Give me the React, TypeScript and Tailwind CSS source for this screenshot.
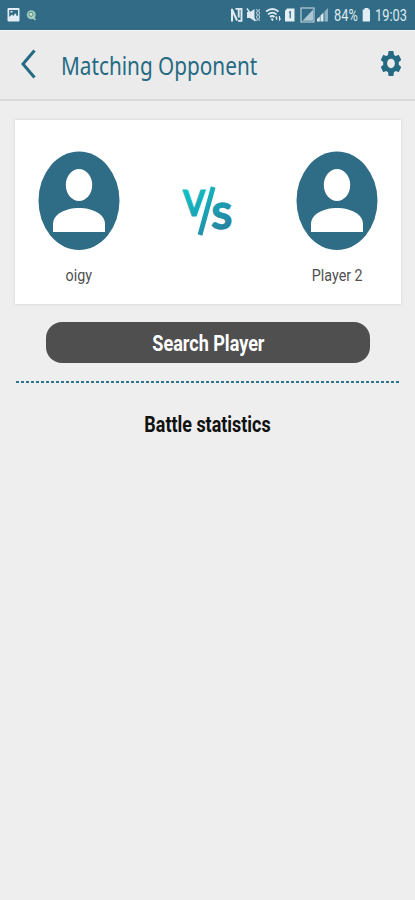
import { MdSettings } from 'react-icons/md'

function StatusBar() {
  return (
    <div className="h-[30px] w-full bg-[#316b85] flex items-center justify-between">
      <svg width="60" height="30" viewBox="0 0 60 30">
        <rect x="7.5" y="8" width="12" height="13.5" rx="1" fill="#e2eef4" />
        <path d="M9.200 10h8.800v5.500l-1.500.5-.5-2.500-1.500.5-1 2-1.500-1.500-2.800 2.500z" fill="#316b85" />
        <path d="M10.500 11h2v1.500h-2z" fill="#e2eef4" />
        <circle cx="31.300" cy="14.800" r="4.500" fill="#9cc9bb" />
        <circle cx="31" cy="14.300" r="2" fill="#d2e7c9" stroke="#568c87" />
        <path d="M32.500 16.500l3 3.500" stroke="#aed3c9" strokeWidth="1.500" />
      </svg>

      <div className="flex items-center h-[30px]">
        <svg width="102" height="30" viewBox="230 0 102 30" fill="none" stroke="#dfebf1">
          {/* nfc */}
          <path d="M232 21.500V8.800" strokeWidth="2" />
          <path d="M232 9.500l5 11" strokeWidth="2" />
          <path d="M235.500 8.900h6v12h-3.500M238.700 9.500v8" strokeWidth="1.900" />
          {/* muted + vibrate */}
          <path d="M247 12h3l4.500-3v12l-4.500-3h-3z" fill="#dfebf1" stroke="none" />
          <path d="M247 8.500l8.500 12.500" strokeWidth="1.400" />
          <path d="M256.500 9l1 2-1 2 1 2-1 2 1 2-1 2M259.300 9l-.5 2 .7 2-.7 2 .7 2-.7 2 .5 2" strokeWidth="0.900" />
          {/* wifi */}
          <path d="M266 11.500q6.500-5 12.500 0M268 14.300q4.500-3.500 8.500 0M270 17q2.300-2 4.500 0" strokeWidth="1.700" />
          <path d="M271.500 18.500l1.500 2" strokeWidth="1.800" />
          <path d="M276.700 20v-3.500M275.500 18l1.200-1.500M279.500 16v4l1.200-1.500" strokeWidth="1.100" />
          {/* sim */}
          <path d="M287 8.500h7.500v13h-9.500V11z" fill="#e6f0f4" stroke="none" />
          <path d="M289 12.500l1.200-.7v6.500" stroke="#316b85" strokeWidth="1.300" />
          {/* signals */}
          <rect x="301" y="8" width="13" height="14" stroke="#c3d7e0" strokeWidth="1.100" />
          <path d="M302.500 20.800l10.500-11v11z" fill="#aac6d3" stroke="none" />
          <path d="M317 21.500v-2.500l2.800-2.500v5zM320.500 21.500V15.500l3-3v9z" fill="#dfebf1" stroke="none" />
          <path d="M324.500 21.500V11.500l3.500-3.500v13.500z" fill="#8fb2c2" stroke="none" />
        </svg>
        <div className="w-[28px] ml-[2px]">
          <span className="inline-block whitespace-nowrap origin-left scale-x-[0.8] pt-px text-[16px] leading-[30px] text-[#dfebf1] font-[Roboto,sans-serif]">84%</span>
        </div>
        <svg width="8" height="30" viewBox="0 0 8 30">
          <path d="M2.500 8h4v1.500h1.500v12H.7v-12h1.800z" fill="#e2eef4" />
        </svg>
        <div className="w-[40px] ml-[5px]">
          <span className="inline-block whitespace-nowrap origin-left scale-x-[0.8] pt-px text-[16px] leading-[30px] text-[#dfebf1] font-[Roboto,sans-serif]">19:03</span>
        </div>
      </div>
    </div>
  )
}

function Header() {
  return (
    <header className="h-[71px] w-full bg-[#ebebeb] border-t border-t-[#f6f8f8] border-b-2 border-b-[#dadada] flex items-center text-[#256a83]">
      <button aria-label="Back" className="ml-[20px] mb-[2px] w-[18px] shrink-0">
        <svg width="18" height="32" viewBox="0 0 18 32" fill="none" stroke="currentColor" strokeWidth="3">
          <path d="M14.500 2.500L3 16l11.500 13.500" />
        </svg>
      </button>
      <h1 className="ml-[23px] flex-1 whitespace-nowrap origin-left scale-x-[0.83] text-[25px] leading-[34px] font-['Noto_Sans',sans-serif]">
        Matching Opponent
      </h1>
      <button aria-label="Settings" className="mr-[11px] mb-[3px] shrink-0">
        <MdSettings className="w-[26px] h-[31px]" preserveAspectRatio="none" />
      </button>
    </header>
  )
}

function Player({ name }: { name: string }) {
  return (
    <div className="w-[82px] flex flex-col items-center">
      <svg width="82" height="100" viewBox="0 0 82 100">
        <ellipse cx="41" cy="49.700" rx="40.500" ry="49.200" fill="#2f6c86" />
        <ellipse cx="41" cy="34" rx="13.200" ry="16" fill="#fff" />
        <path d="M15 81V73C15 63 28 57 41 57S67 63 67 73v8z" fill="#fff" />
      </svg>
      <span className="mt-[12px] whitespace-nowrap scale-x-[0.84] text-[17px] leading-[24px] text-[#505050] font-[Roboto,sans-serif]">
        {name}
      </span>
    </div>
  )
}

function Versus() {
  return (
    <svg width="56" height="76" viewBox="180 170 56 76" className="mt-[19px] overflow-visible">
      <defs>
        <linearGradient id="vs" gradientUnits="userSpaceOnUse" x1="188" y1="190" x2="222" y2="232">
          <stop offset="0" stopColor="#0fc0c6" />
          <stop offset="1" stopColor="#2584a2" />
        </linearGradient>
      </defs>
      <g fill="url(#vs)" stroke="url(#vs)" fontFamily="Lato, sans-serif" fontWeight="700">
        <text x="183" y="215.500" fontSize="36" strokeWidth="1.200" textLength="22" lengthAdjust="spacingAndGlyphs">V</text>
        <text x="211.500" y="229" fontSize="37" strokeWidth="1.600" textLength="20.500" lengthAdjust="spacingAndGlyphs">S</text>
        <path d="M213.200 187L200 235" strokeWidth="4.800" />
      </g>
    </svg>
  )
}

export default function App() {
  return (
    <div className="w-full min-h-[900px] bg-[#eeeeee] overflow-hidden font-[Roboto,sans-serif]">
      <StatusBar />
      <Header />

      <main className="flex flex-col items-center">
        <section className="mt-[19px] ml-px w-[386px] h-[184px] bg-white shadow-[0_0_3px_rgba(0,0,0,0.12)] flex items-start justify-between pl-[23px] pr-[23px] pt-[31px]">
          <Player name="oigy" />
          <Versus />
          <Player name="Player 2" />
        </section>

        <button className="mt-[18px] w-[324px] h-[41px] rounded-[16px] bg-[#4f4f4f] text-white flex items-center justify-center">
          <span className="mt-[3px] ml-px whitespace-nowrap scale-x-[0.82] text-[22px] leading-[28px] font-bold">Search Player</span>
        </button>

        <svg width="383" height="2" className="mt-[18px]">
          <path d="M0 1h383" stroke="#2f7390" strokeWidth="1.800" strokeDasharray="3 2" />
        </svg>

        <h2 className="mt-[28px] whitespace-nowrap scale-x-[0.815] text-[22px] leading-[28px] font-bold text-[#111]">
          Battle statistics
        </h2>
      </main>
    </div>
  )
}
